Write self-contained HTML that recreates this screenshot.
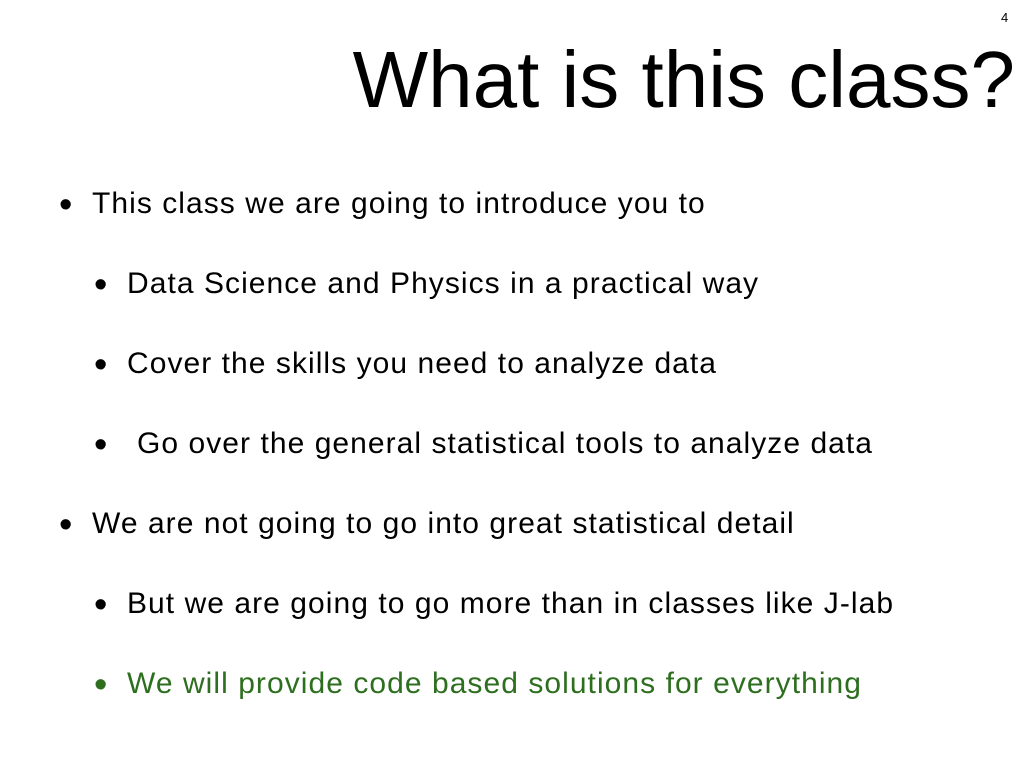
<!DOCTYPE html>
<html><head><meta charset="utf-8"><style>
html,body{margin:0;padding:0;background:#fff;}
body{width:1024px;height:768px;position:relative;overflow:hidden;font-family:"Liberation Sans",Arial,sans-serif;color:#000;}
.t{position:absolute;white-space:nowrap;}
.title{font-size:80px;line-height:80px;right:9px;top:40px;}
.num{font-size:13px;line-height:13px;left:1001px;top:11px;}
.l{font-size:30px;line-height:30px;letter-spacing:1.05px;}
.b{font-size:38px;line-height:30px;}
.g{color:#2d6e1f;}
</style></head><body>
<div class="t num">4</div>
<div class="t title">What is this class?</div>
<div class="t b" style="left:59px;top:190px">•</div><div class="t l" style="left:92px;top:189px">This class we are going to introduce you to</div>
<div class="t b" style="left:94px;top:270px">•</div><div class="t l" style="left:127px;top:269px">Data Science and Physics in a practical way</div>
<div class="t b" style="left:94px;top:350px">•</div><div class="t l" style="left:127px;top:349px">Cover the skills you need to analyze data</div>
<div class="t b" style="left:94px;top:430px">•</div><div class="t l" style="left:137px;top:429px">Go over the general statistical tools to analyze data</div>
<div class="t b" style="left:59px;top:510px">•</div><div class="t l" style="left:92px;top:509px">We are not going to go into great statistical detail</div>
<div class="t b" style="left:94px;top:590px">•</div><div class="t l" style="left:127px;top:589px">But we are going to go more than in classes like J-lab</div>
<div class="t b g" style="left:94px;top:670px">•</div><div class="t l g" style="left:127px;top:669px">We will provide code based solutions for everything</div>
</body></html>
